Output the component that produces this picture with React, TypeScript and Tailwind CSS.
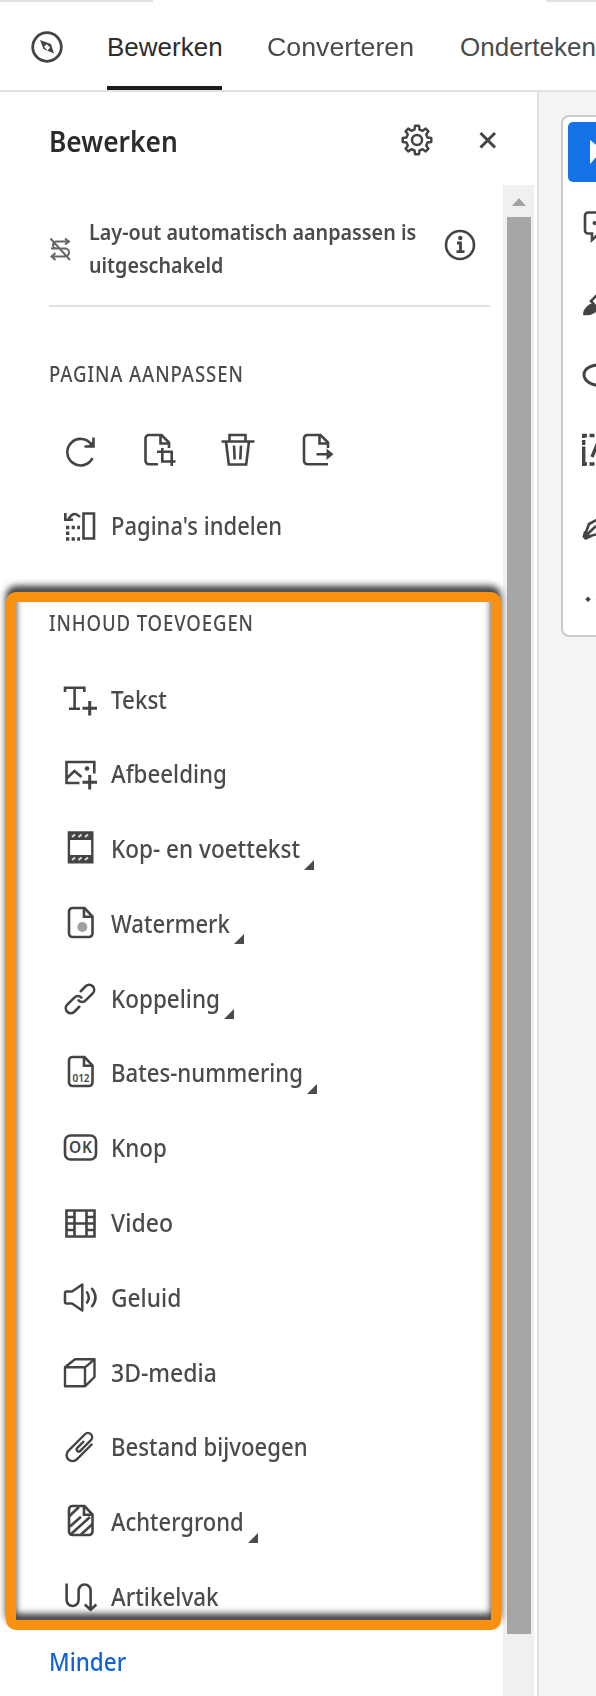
import { useLayoutEffect, useRef, useState } from "react";
import type { ReactNode } from "react";

/** Text whose glyphs are condensed or widened to a given width. */
function Fit({ width, className = "", children }: { width: number; className?: string; children: ReactNode }) {
  const ref = useRef<HTMLSpanElement>(null);
  const [scale, setScale] = useState(1);
  useLayoutEffect(() => {
    if (ref.current) setScale(width / ref.current.offsetWidth);
  }, [width]);
  return (
    <span className="block shrink-0" style={{ width }}>
      <span
        ref={ref}
        className={`inline-block origin-left whitespace-nowrap align-top ${className}`}
        style={{ transform: `scaleX(${scale})` }}
      >
        {children}
      </span>
    </span>
  );
}

function Icon({ children, w = 2.6 }: { children: ReactNode; w?: number }) {
  return (
    <svg
      viewBox="0 0 36 36"
      className="size-9 shrink-0 overflow-visible"
      fill="none"
      stroke="#444"
      strokeWidth={w}
    >
      {children}
    </svg>
  );
}

function Doc() {
  return (
    <>
      <path d="M10 2h12.500l8 8.500V27.500a3.500 3.500 0 0 1-3.500 3.500H10.500a3.500 3.500 0 0 1-3.500-3.500V5.500A3.500 3.500 0 0 1 10.500 2z" />
      <path d="M22 2.500V10.700h8" />
    </>
  );
}

const Plus = () => <path d="M27.700 19v14.500M20.500 26.200H35" strokeWidth="3" />;

const items: { label: string; width: number; more?: boolean; icon: ReactNode }[] = [
  {
    label: "Tekst",
    width: 56,
    icon: (
      <Icon>
        <path d="M3 10V5.800H22.300V10M12.600 5.800V26.500M7 26.800H18" />
        <Plus />
      </Icon>
    ),
  },
  {
    label: "Afbeelding",
    width: 116,
    icon: (
      <Icon>
        <path d="M32.300 17.500V6H4.500V27H17.500M4.500 22.500l8-7.500 7 6" />
        <circle cx="25" cy="12.500" r="2.300" fill="#444" stroke="none" />
        <Plus />
      </Icon>
    ),
  },
  {
    label: "Kop- en voettekst",
    width: 189,
    more: true,
    icon: (
      <Icon w={2.4}>
        <path d="M6.900 1.500H30.300V31.300H6.900z" />
        <path d="M6.500 1h24v8h-24zM6.500 24h24v7.500h-24z" fill="#444" stroke="none" />
        <path d="M10 6l3-2.500M16.500 6l3-2.500M23 6l3-2.500M10 29l3-2.500M16.500 29l3-2.500M23 29l3-2.500" stroke="#ddd" strokeWidth="2" />
      </Icon>
    ),
  },
  {
    label: "Watermerk",
    width: 119,
    more: true,
    icon: (
      <Icon>
        <Doc />
        <circle cx="20.300" cy="21" r="5" fill="#a0a0a0" stroke="none" />
      </Icon>
    ),
  },
  {
    label: "Koppeling",
    width: 109,
    more: true,
    icon: (
      <Icon>
        <path
          d="M12 23H5a5 5 0 0 1 0-10h10a5 5 0 0 1 5 5M24 13h7a5 5 0 0 1 0 10H21a5 5 0 0 1-5-5"
          transform="rotate(-45 18 18)"
          strokeLinecap="round"
        />
      </Icon>
    ),
  },
  {
    label: "Bates-nummering",
    width: 192,
    more: true,
    icon: (
      <Icon>
        <Doc />
        <text x="10.500" y="26.500" textLength="17" fontSize="10" fontWeight="600" fontFamily="Noto Sans, sans-serif" fill="#444" stroke="none">
          012
        </text>
      </Icon>
    ),
  },
  {
    label: "Knop",
    width: 56,
    icon: (
      <Icon>
        <rect x="3" y="5.500" width="31" height="24" rx="5.500" />
        <text x="7" y="23" textLength="23" fontSize="15.500" fontWeight="600" fontFamily="Noto Sans, sans-serif" fill="#444" stroke="none">
          OK
        </text>
      </Icon>
    ),
  },
  {
    label: "Video",
    width: 62,
    icon: (
      <Icon>
        <path d="M4.500 5.500H32.500V31.500H4.500zM12.500 5.500v26M24.500 5.500v26M12.500 18.500h12M4.500 12h8M4.500 18.500h8M4.500 25h8M24.500 12h8M24.500 18.500h8M24.500 25h8" />
      </Icon>
    ),
  },
  {
    label: "Geluid",
    width: 70,
    icon: (
      <Icon w={2.5}>
        <path d="M4.500 11.500H10L20.300 4.500V30.500L10 23.500H4.500a1.500 1.500 0 0 1-1.500-1.500V13a1.500 1.500 0 0 1 1.500-1.500z" strokeLinejoin="round" />
        <path d="M24.500 11.500q4.500 6 0 12M29.500 8q8 9.500 0 19" />
      </Icon>
    ),
  },
  {
    label: "3D-media",
    width: 106,
    icon: (
      <Icon w={2.4}>
        <path d="M3 12.300H23V31.300H3zM3 12.300L13 4.300H32.500L23 12.300M32.500 4.300V22L23 31.300" strokeLinejoin="round" />
      </Icon>
    ),
  },
  {
    label: "Bestand bijvoegen",
    width: 197,
    icon: (
      <Icon w={2.4}>
        <path
          d="M28 24.500H7a6 6 0 0 1 0-12H30.500a4.200 4.200 0 0 1 0 8.400H15.500a2.100 2.100 0 0 1 0-4.200H24"
          transform="rotate(-45 18 18)"
          strokeLinecap="round"
        />
      </Icon>
    ),
  },
  {
    label: "Achtergrond",
    width: 133,
    more: true,
    icon: (
      <Icon>
        <Doc />
        <path d="M7 12.500L17 3M8 22.500L19 12.800M8.500 30.500L28 13M19 30.500L30.500 20" />
      </Icon>
    ),
  },
  {
    label: "Artikelvak",
    width: 108,
    icon: (
      <Icon>
        <path d="M4.600 4.500V21a6 6 0 0 0 12 0V11.500a6 6 0 0 1 12 0V30M22.800 25.500l5.800 5.300 5.800-5.300" />
      </Icon>
    ),
  },
];

function Row({ label, width, more, icon }: { label: string; width: number; more?: boolean; icon: ReactNode }) {
  return (
    <li className="flex h-[74.770px] items-center pl-[62px]">
      {icon}
      <span className="ml-[12.500px] flex items-center pb-[2px] text-[26px] leading-9 font-medium text-[#4b4b4b]">
        <Fit width={width}>{label}</Fit>
      </span>
      {more && (
        <svg viewBox="0 0 9 9" className="mt-[31px] ml-[4.500px] size-[10px]" fill="#4b4b4b">
          <path d="M9 0V9H0z" />
        </svg>
      )}
    </li>
  );
}

function Gear() {
  const teeth = 8;
  const pts: string[] = [];
  for (let i = 0; i < teeth; i++) {
    const step = (Math.PI * 2) / teeth;
    const at = (r: number, f: number) => {
      const a = i * step + f * step - Math.PI / 2;
      return `${(18 + r * Math.cos(a)).toFixed(2)} ${(18 + r * Math.sin(a)).toFixed(2)}`;
    };
    pts.push(at(14.4, -0.17), at(14.4, 0.17), at(10.8, 0.3), at(10.8, 0.7));
  }
  return (
    <Icon w={2.5}>
      <path d={`M${pts.join("L")}Z`} strokeLinejoin="round" />
      <circle cx="18" cy="18" r="5" />
    </Icon>
  );
}

const pageTools: ReactNode[] = [
  <Icon key="rotate">
    <path d="M30.500 27.200A13.300 13.300 0 1 1 29.500 13.500" />
    <path d="M31.500 6.500V15.500H22.500" />
    <path d="M31 10V15H26z" fill="#444" stroke="none" />
  </Icon>,
  <Icon key="crop">
    <path d="M17 33.300H8a3.500 3.500 0 0 1-3.500-3.500V7.500A3.500 3.500 0 0 1 8 4H20.500l7.500 7.500V17M19.500 4.500V12.500H28" />
    <path d="M16 20.700H30.700V35M21.300 17V30.500H34.500" />
  </Icon>,
  <Icon key="delete">
    <path d="M1.500 10.500H34.500M9.500 10V4H25.500V10M6 10.500L8.800 33.500H26.200L29 10.500M14 14.500l.7 14M21 14.500l-.7 14" />
  </Icon>,
  <Icon key="extract">
    <path d="M29 33.300H8.500a3.500 3.500 0 0 1-3.500-3.500V7.500A3.500 3.500 0 0 1 8.500 4H21.500l7.500 7.500V17M20.500 4.500V12.500H29M17.500 23.300H29" />
    <path d="M27.500 17.500L34.500 23.300L27.500 29z" fill="#444" stroke="none" />
  </Icon>,
];

const quickTools: ReactNode[] = [
  <Icon key="comment">
    <path d="M30 4.500H8A3 3 0 0 0 5 7.500V22.500a3 3 0 0 0 3 3H12V32l7-6.500H30" />
    <circle cx="14.500" cy="15" r="2" fill="#444" stroke="none" />
  </Icon>,
  <Icon key="highlight">
    <path d="M25 4L11 18l6 7L30 12" />
    <path d="M8.500 22q4-2.500 7 .5t0 7q-5 3.500-12.500 2.500 0-6 5.500-10z" fill="#444" stroke="none" />
  </Icon>,
  <Icon key="draw" w={3}>
    <path d="M24 8.500C13 6.500 4 11 4 17.500S12 29.500 22 28" />
  </Icon>,
  <Icon key="field" w={3.4}>
    <path d="M2 3.500H24M2 32H24" strokeDasharray="5 2.500" />
    <path d="M3.700 2V34" strokeDasharray="4 2 5 1.500 20 0" />
    <path d="M12 25L21 3" />
  </Icon>,
  <Icon key="sign">
    <path d="M4 30.500L9 17l13-7M4 30.500L18 27M4.500 30L16 19" />
    <path d="M4 24l-1.500 6 3 3L12 30z" fill="#444" stroke="none" />
  </Icon>,
  <Icon key="more">
    <path d="M8 15.500l2.800 2.800-2.800 2.800-2.800-2.800z" fill="#444" stroke="none" />
    <path d="M18.500 15.500l2.800 2.800-2.800 2.800-2.800-2.800z" fill="#444" stroke="none" />
  </Icon>,
];

export default function App() {
  return (
    <div className="relative flex h-[1696px] w-[596px] flex-col overflow-hidden bg-white font-['Noto_Sans',sans-serif] text-[#4b4b4b]">
      <header className="flex h-[91.500px] shrink-0 flex-col border-b-2 border-[#e1e1e1]">
        <div className="flex h-[1.500px] shrink-0 justify-between">
          <div className="w-[153px] bg-[#e3e3e3]" />
          <div className="w-[50px] bg-[#e3e3e3]" />
        </div>
        <nav className="flex min-h-0 flex-1 font-['Liberation_Sans',sans-serif] text-[26px] whitespace-nowrap">
          <div className="ml-[29px] flex w-[78px] shrink-0 pt-[27px]">
            <Icon w={2.8}>
              <circle cx="18" cy="18" r="14.300" />
              <path d="M11 11l11 4 3 9.500-10.500-4.500zM17.500 15.300l-2.500 2.500 3.500 3.700 2.700-3z" fill="#444" fillRule="evenodd" stroke="none" />
            </Icon>
          </div>
          <div className="flex w-[115px] shrink-0 flex-col justify-between border-b-4 border-[#1d1d1d] pt-[25px] leading-10 text-[#2c2c2c]">
            Bewerken
          </div>
          <div className="ml-[45px] shrink-0 pt-[25px] leading-10">
            <Fit width={147}>Converteren</Fit>
          </div>
          <div className="ml-[46px] shrink-0 pt-[25px] leading-10">Ondertekenen</div>
        </nav>
      </header>

      <div className="flex min-h-0 flex-1">
        <aside className="flex w-[539px] shrink-0 flex-col border-r-2 border-[#e1e1e1]">
          <div className="flex h-[93.500px] shrink-0 items-start pt-[30.500px] pl-[49px]">
            <div className="pt-[1px] text-[28px] leading-9 font-semibold text-[#2c2c2c]">
              <Fit width={129}>Bewerken</Fit>
            </div>
            <div className="ml-[221px]">
              <Gear />
            </div>
            <div className="ml-[35px]">
              <Icon w={3}>
                <path d="M10.500 11L25 25.500M25 11L10.500 25.500" />
              </Icon>
            </div>
          </div>

          <div className="flex min-h-0 flex-1">
            <div className="w-[503px] shrink-0">
              <div className="ml-[49px] flex h-[121.500px] w-[441px] border-b-2 border-[#e1e1e1]">
                <div className="mt-[52px] -ml-[1px] h-6 w-6">
                  <svg viewBox="0 0 24 24" className="size-6" fill="none" stroke="#666" strokeWidth="2">
                    <path d="M2.500 1.500L22 23M20 4.500H8.500a3.500 3.500 0 0 0 0 7H17a4 4 0 0 1 0 8H5M17 1.500l4 3-4 3M7.500 16l-4 3.500 4 3.500M3 11.500h5" />
                  </svg>
                </div>
                <div className="mt-[30px] ml-[17px] flex w-[355px] flex-col text-[22px] leading-[33px] font-semibold">
                  <Fit width={327}>Lay-out automatisch aanpassen is</Fit>
                  <Fit width={134}>uitgeschakeld</Fit>
                </div>
                <div className="mt-[42px] -ml-[2px]">
                  <Icon>
                    <circle cx="18" cy="18" r="14" />
                    <path d="M15 16H18.500V24M14.500 24.700H22.500" strokeWidth="2.800" />
                    <circle cx="18.300" cy="11" r="2.200" fill="#444" stroke="none" />
                  </Icon>
                </div>
              </div>

              <h2 className="mt-[53.500px] pl-[49px] text-[21px] leading-7 font-medium">
                <Fit width={195} className="tracking-[1px]">PAGINA AANPASSEN</Fit>
              </h2>
              <div className="mt-[42.500px] flex gap-[43px] pl-[62px]">{pageTools}</div>
              <ul className="mt-[22px]">
                <Row
                  label="Pagina's indelen"
                  width={171}
                  icon={
                    <Icon>
                      <path d="M21.500 5.500H32V30.500H21.500z" />
                      <path d="M18 9q-6-7-11.500 2" />
                      <path d="M3.300 5V11.700H11" />
                      <path d="M4 19.500H18M4 31H18M4 25.300H7.500" strokeWidth="3.500" strokeDasharray="3.300 2.300" />
                    </Icon>
                  }
                />
              </ul>

              <h2 className="mt-[45.500px] pl-[49px] text-[21px] leading-7 font-medium">
                <Fit width={205} className="tracking-[1px]">INHOUD TOEVOEGEN</Fit>
              </h2>
              <ul className="mt-[25.500px]">
                {items.map((item) => (
                  <Row key={item.label} {...item} />
                ))}
              </ul>
              <div className="mt-[9px] pl-[49px] text-[26px] leading-9 font-medium text-[#1264d3]">
                <Fit width={77}>Minder</Fit>
              </div>
            </div>

            <div className="flex w-[31px] shrink-0 flex-col items-center bg-[#f0f0f0]">
              <svg viewBox="0 0 14 8" className="mt-[13px] h-2 w-3.5" fill="#a3a3a3">
                <path d="M7 0l7 8H0z" />
              </svg>
              <div className="mt-[11px] h-[1417px] w-6 bg-[#a6a6a6]" />
            </div>
          </div>
        </aside>

        <main className="min-w-0 flex-1 overflow-hidden bg-[#f4f4f4]">
          <div className="mt-[23px] ml-[22px] h-[522px] w-[90px] rounded-lg border-2 border-[#cbcbcb] bg-white pt-[5px] pl-[5px]">
            <div className="flex h-[60px] w-[70px] items-center rounded-[5px] bg-[#1473e6] pl-[22px]">
              <svg viewBox="0 0 20 24" className="h-6 w-5" fill="#fff">
                <path d="M0 0l18 14-10 1-8 9z" />
              </svg>
            </div>
            <div className="mt-[7px] pl-[12px]">
              {quickTools.map((tool, i) => (
                <div key={i} className="flex h-[74.700px] items-center">
                  {tool}
                </div>
              ))}
            </div>
          </div>
        </main>
      </div>

      <div className="pointer-events-none absolute top-[592px] left-[6px] h-[1038px] w-[494.500px] drop-shadow-[0_-6px_3.5px_rgba(0,0,0,0.8)]">
        <div className="h-full w-full overflow-hidden rounded-[10px]">
          <div className="h-full w-full border-[10px] border-[#f9900f]" />
        </div>
      </div>
    </div>
  );
}
